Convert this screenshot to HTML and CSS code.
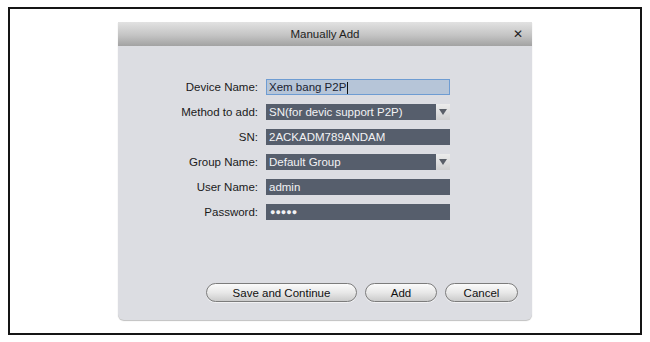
FILE: index.html
```html
<!DOCTYPE html>
<html lang="en">
<head>
  <meta charset="UTF-8">
  <title>Manually Add</title>
  <link rel="stylesheet" href="styles.css">
</head>
<body>
<div class="frame">
  <div class="dialog">
    <div class="title-bar">
      <span class="title">Manually Add</span>
      <span class="close">&#x2715;</span>
    </div>
    <form class="form">
      <label class="label">Device Name:</label>
      <div class="field field-active">Xem bang P2P<span class="caret"></span></div>

      <label class="label">Method to add:</label>
      <div class="select">
        <div class="field">SN(for devic support P2P)</div>
        <span class="arrow"></span>
      </div>

      <label class="label">SN:</label>
      <div class="field">2ACKADM789ANDAM</div>

      <label class="label">Group Name:</label>
      <div class="select">
        <div class="field">Default Group</div>
        <span class="arrow"></span>
      </div>

      <label class="label">User Name:</label>
      <div class="field">admin</div>

      <label class="label">Password:</label>
      <div class="field dots">&#9679;&#9679;&#9679;&#9679;&#9679;</div>
    </form>
    <div class="buttons">
      <button type="button" class="btn btn-save">Save and Continue</button>
      <button type="button" class="btn btn-add">Add</button>
      <button type="button" class="btn btn-cancel">Cancel</button>
    </div>
  </div>
</div>
</body>
</html>
```

FILE: styles.css
```css
html, body { margin: 0; padding: 0; background: #fff; font-family: 'Liberation Sans', Arial, sans-serif; }
.frame { box-sizing: border-box; width: 634px; height: 328px; margin: 7px 0 0 8px; border: 2px solid #151515; padding: 13px 0 0 108px; }
.dialog { box-sizing: border-box; width: 414px; height: 298px; background: #dcdde2; border-radius: 0 0 6px 6px; display: flex; flex-direction: column; box-shadow: 0 1px 1px rgba(0,0,0,0.25); }
.title-bar { height: 24px; display: flex; align-items: center; justify-content: center; position: relative; background: linear-gradient(#e2e2e2 0%, #c4c4c4 55%, #a2a2a2 100%); }
.title { font-size: 11.5px; color: #1e1e1e; }
.close { position: absolute; right: 9px; top: 5px; font-size: 12px; color: #222; }
.form { display: grid; grid-template-columns: 140px 184px; column-gap: 8px; row-gap: 9px; grid-auto-rows: 16px; padding-top: 33px; }
.label { font-size: 11.5px; color: #1a1a1a; text-align: right; line-height: 16px; }
.field { box-sizing: border-box; height: 16px; line-height: 16px; padding-left: 3px; font-size: 11.5px; color: #f2f2f4; background: #565e6c; flex: 1; white-space: nowrap; overflow: hidden; }
.field-active { background: #b6c5d8; color: #1a2230; border: 1px solid #6e9cd2; line-height: 14px; padding-left: 2px; }
.caret { display: inline-block; width: 1px; height: 12px; background: #111; vertical-align: middle; margin-left: 1px; }
.select { display: flex; }
.arrow { width: 14px; height: 16px; background: linear-gradient(#ececec, #cfcfcf); position: relative; }
.arrow::after { content: ""; position: absolute; left: 3px; top: 5px; border-left: 4px solid transparent; border-right: 4px solid transparent; border-top: 6px solid #5a5f68; }
.dots { font-size: 9px; letter-spacing: 0; padding-left: 4px; }
.buttons { margin-top: auto; padding: 0 0 18px 88px; display: flex; gap: 8px; }
.btn { height: 19px; padding: 0; border: 1px solid #7c7c7c; border-radius: 10px; background: linear-gradient(#fbfbfb 0%, #e8e8e8 50%, #cbcbcb 100%); font-family: 'Liberation Sans', Arial, sans-serif; font-size: 11.5px; color: #111; box-shadow: 0 1px 0 rgba(255,255,255,0.6); }
.btn-save { width: 151px; }
.btn-add { width: 72px; }
.btn-cancel { width: 73px; }
```
